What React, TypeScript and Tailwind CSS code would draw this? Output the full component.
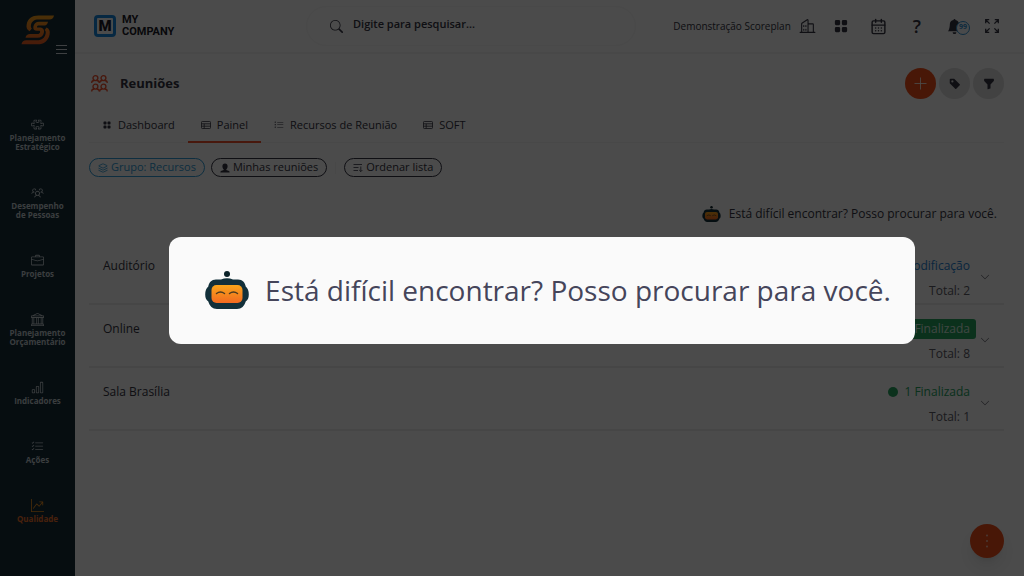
import type { ReactNode } from "react";
import {
  BsBank,
  BsBarChart,
  BsBellFill,
  BsBriefcase,
  BsChevronDown,
  BsFunnelFill,
  BsGraphUpArrow,
  BsGridFill,
  BsListCheck,
  BsListUl,
  BsPuzzle,
  BsSearch,
  BsTagFill,
} from "react-icons/bs";
import { PiBuildings, PiUsersThree } from "react-icons/pi";
import { LuCalendarDays, LuLayers } from "react-icons/lu";

const modules: { label: string[]; icon: ReactNode; active?: boolean }[] = [
  { label: ["Planejamento", "Estratégico"], icon: <BsPuzzle /> },
  { label: ["Desempenho", "de Pessoas"], icon: <PiUsersThree /> },
  { label: ["Projetos"], icon: <BsBriefcase /> },
  { label: ["Planejamento", "Orçamentário"], icon: <BsBank /> },
  { label: ["Indicadores"], icon: <BsBarChart /> },
  { label: ["Ações"], icon: <BsListCheck /> },
  { label: ["Qualidade"], icon: <BsGraphUpArrow />, active: true },
];

const tabs: { label: string; icon: ReactNode; active?: boolean }[] = [
  { label: "Dashboard", icon: <BsGridFill className="h-2 w-2" /> },
  { label: "Painel", icon: <TableIcon />, active: true },
  { label: "Recursos de Reunião", icon: <BsListUl className="h-2.5 w-2.5" /> },
  { label: "SOFT", icon: <TableIcon /> },
];

function ScoreplanLogo() {
  return (
    <svg viewBox="0 0 34 30" className="h-[30px] w-[34px]" aria-label="Scoreplan" role="img">
      <defs>
        <linearGradient id="brand" x1="0" y1="0" x2="0" y2="30" gradientUnits="userSpaceOnUse">
          <stop offset="0" stopColor="#f6a21b" />
          <stop offset="1" stopColor="#ee5a24" />
        </linearGradient>
      </defs>
      <g fill="url(#brand)">
        <path d="M33 0.500C32.500 3 31 4.500 28.500 4.500H17.500C13 4.500 10.800 6.500 10 9.800C9.700 11.500 9.900 12.600 10.800 13.600L8.600 16.200C6 14.800 5 12.500 5.700 9.300C6.800 3.800 11 0.500 17.500 0.500Z" />
        <path d="M27 6.700C26.500 9.200 25 10.600 22.500 10.600H18.200C16.800 10.600 16.200 11 16 11.700C15.900 12.400 16.200 12.600 17 12.600H18.200C21.800 12.600 23.600 14.500 22.900 17.800C22.200 21 20 22.800 16.500 22.800H4.500C5 20.300 6.500 19.100 9 19.100H16.300C17.900 19.100 18.800 18.500 19.100 17.300C19.300 16.200 18.900 15.800 17.500 15.800H16C13.200 15.800 11.800 14.200 12.400 11.400C13 8.400 15 6.700 18 6.700Z" />
        <path d="M25.500 12.600C28.300 13.800 29.300 16.200 28.600 19.400C27.500 25.500 23 29.300 16.500 29.300H0.500C1 26.700 2.600 25.300 5.200 25.300H16.500C20.800 25.300 23.700 23 24.600 18.800C25 17 24.700 16 23.700 15.100Z" />
      </g>
    </svg>
  );
}

function Robot({ className }: { className: string }) {
  return (
    <svg viewBox="0 0 44 38" className={className} aria-hidden="true">
      <defs>
        <linearGradient id="face" x1="0" y1="0" x2="0" y2="1">
          <stop offset="0" stopColor="#f9a51a" />
          <stop offset="1" stopColor="#f26a21" />
        </linearGradient>
      </defs>
      <circle cx="22" cy="3" r="3" fill="#0b2229" />
      <path
        d="M16 8.500Q22 6 28 8.500H33C37.500 8.500 40 11.500 40.700 15.500Q43.800 18 43.800 23.500Q43.800 28.500 40.700 30.500C39.500 35 36.500 38 32 38H12C7.500 38 4.500 35 3.300 30.500Q0.200 28.500 0.200 23.500Q0.200 18 3.300 15.500C4 11.500 6.500 8.500 11 8.500Z"
        fill="#12303a"
      />
      <rect x="6.500" y="14" width="31" height="18" rx="5" fill="url(#face)" />
      <path d="M11.500 22.500Q15.500 19.500 19.500 22.500M24.500 22.500Q28.500 19.500 32.500 22.500" fill="none" stroke="#4a3a20" strokeWidth="1.500" strokeLinecap="round" />
    </svg>
  );
}

function MeetingIcon() {
  const people = [
    [0, 0],
    [8.5, 0],
    [0, 9],
    [8.5, 9],
  ];
  return (
    <svg viewBox="0 0 18 18" className="h-[17px] w-[17px]" fill="none" stroke="#f0502d" strokeWidth="1.400" aria-hidden="true">
      {people.map(([x, y]) => (
        <g key={`${x}-${y}`} transform={`translate(${x} ${y})`}>
          <circle cx="4.700" cy="3.300" r="2.600" />
          <path d="M0.800 8.400V7.600C0.800 6.400 1.800 6 3.400 5.800M6 5.800C7.600 6 8.600 6.400 8.600 7.600V8.400" />
        </g>
      ))}
    </svg>
  );
}

function TableIcon() {
  return (
    <svg viewBox="0 0 10 10" className="h-2.5 w-2.5" fill="none" stroke="currentColor" strokeWidth="0.800" aria-hidden="true">
      <rect x="0.500" y="1.500" width="9" height="7" rx="0.800" />
      <path d="M0.500 3.800H9.500M0.500 6.200H9.500M3.200 3.800V8.500" />
    </svg>
  );
}

function ExpandIcon() {
  return (
    <svg viewBox="0 0 14 14" className="h-3.5 w-3.5" fill="none" stroke="currentColor" strokeWidth="1.300" aria-hidden="true">
      <path d="M0.700 4.200V0.700H4.200M0.700 0.700L4.600 4.600M9.800 0.700H13.300V4.200M13.300 0.700L9.400 4.600M0.700 9.800V13.300H4.200M0.700 13.300L4.600 9.400M9.800 13.300H13.300V9.800M13.300 13.300L9.400 9.400" />
    </svg>
  );
}

function SortIcon() {
  return (
    <svg viewBox="0 0 10 10" className="h-2.5 w-2.5" fill="none" stroke="currentColor" strokeWidth="0.800" aria-hidden="true">
      <path d="M0.500 1.500H9M0.500 4.500H5.500M0.500 7.500H5M7.800 3.500V8.500M6.200 7L7.800 8.600L9.400 7" />
    </svg>
  );
}

function BustIcon() {
  return (
    <svg viewBox="0 0 10 10" className="h-2.5 w-2.5" fill="currentColor" aria-hidden="true">
      <path d="M5 0.500C6.700 0.500 7.700 1.700 7.600 3.400C7.500 4.900 6.900 5.700 6.300 6.300V7L9 8.100Q9.600 8.400 9.600 9.500H0.400Q0.400 8.400 1 8.100L3.700 7V6.300C3.100 5.700 2.500 4.900 2.400 3.400C2.300 1.700 3.300 0.500 5 0.500Z" />
    </svg>
  );
}

function Sidebar() {
  return (
    <aside className="flex w-[75px] shrink-0 flex-col bg-[#142c38]">
      <div className="flex h-[118px] flex-col pt-[15px]">
        <div className="flex justify-center">
          <ScoreplanLogo />
        </div>
        <button type="button" aria-label="Menu" className="mr-2 flex w-[11px] flex-col gap-[3px] self-end">
          <span className="h-px w-full bg-gray-300" />
          <span className="h-px w-full bg-gray-300" />
          <span className="h-px w-full bg-gray-300" />
        </button>
      </div>
      <nav className="flex flex-col gap-[35px]">
        {modules.map((m) => (
          <a
            key={m.label.join(" ")}
            href="#"
            className={`flex flex-col items-center gap-0.5 text-center text-[8px] leading-[9px] font-bold ${m.active ? "text-[#f0702a]" : "text-[#c3ccd1]"}`}
          >
            <span className={`text-[13px] ${m.active ? "text-[#f5921e]" : ""}`}>{m.icon}</span>
            <span>
              {m.label.map((line) => (
                <span key={line} className="block">
                  {line}
                </span>
              ))}
            </span>
          </a>
        ))}
      </nav>
    </aside>
  );
}

function Header() {
  return (
    <header className="flex h-[54px] items-center border-b-2 border-[#f1f1f1] pr-[25px] pl-[19px]">
      <div className="flex w-[212px] items-center gap-1.5">
        <span className="flex h-[22px] w-[22px] items-center justify-center rounded-[4px] border-[3px] border-[#1787dc] font-[Roboto] text-[15px] leading-none font-black text-[#1c1c28]">
          M
        </span>
        <span className="font-[Roboto] text-[11px] leading-3 font-bold text-[#1c1c28]">
          <span className="block">MY</span>
          <span className="block">COMPANY</span>
        </span>
      </div>
      <label className="flex h-10 w-[330px] items-center gap-2.5 rounded-full border border-[#f4f4f4] bg-[#fafafa] px-[23px]">
        <BsSearch className="h-[13px] w-[13px] text-[#3a3a48]" />
        <input
          type="search"
          aria-label="Pesquisar"
          placeholder="Digite para pesquisar..."
          className="min-w-0 flex-1 bg-transparent pb-1 text-[11px] font-semibold outline-none placeholder:text-[#343442]"
        />
      </label>
      <div className="ml-auto flex items-center text-[#343442]">
        <button type="button" className="flex items-center gap-2 text-[10px]">
          Demonstração Scoreplan
          <PiBuildings className="h-[17px] w-[17px]" />
        </button>
        <button type="button" aria-label="Aplicativos" className="ml-[18px]">
          <BsGridFill className="h-3.5 w-3.5" />
        </button>
        <button type="button" aria-label="Agenda" className="ml-[22px]">
          <LuCalendarDays className="h-[17px] w-[17px]" />
        </button>
        <button type="button" aria-label="Ajuda" className="ml-[26px] text-[18px] leading-4 font-semibold">
          ?
        </button>
        <button type="button" aria-label="Notificações" className="relative ml-[26px] w-[23px]">
          <BsBellFill className="h-[15px] w-[15px]" />
          <span className="absolute top-0.5 right-0 flex h-[14px] w-[14px] items-center justify-center rounded-full border border-[#2f8fd0] bg-[#f4f8fb] text-[7px] font-bold text-[#2f8fd0]">
            99
          </span>
        </button>
        <button type="button" aria-label="Tela cheia" className="ml-[15px]">
          <ExpandIcon />
        </button>
      </div>
    </header>
  );
}

const chip = "flex h-[19px] items-center gap-[3px] rounded-full border px-2 text-[11px]";

function Row({ name, total, children }: { name: string; total: number; children: ReactNode }) {
  return (
    <li className="flex h-[63px] items-start border-b-2 border-[#ebebeb] px-3.5">
      <span className="pt-3.5 text-[12px] leading-5">{name}</span>
      <div className="ml-auto flex flex-col items-end pt-3.5 text-[12px] leading-5 text-[#5b5b66]">
        {children}
        <span className="pt-[5px]">Total: {total}</span>
      </div>
      <button type="button" aria-label={`Expandir ${name}`} className="ml-2.5 pt-[30px] text-[#4d4d5a]">
        <BsChevronDown className="h-2.5 w-2.5" />
      </button>
    </li>
  );
}

export default function App() {
  return (
    <div className="flex min-h-screen bg-[#fafafa] font-['Open_Sans',sans-serif] text-[#343442]">
      <Sidebar />
      <div className="flex min-w-0 flex-1 flex-col">
        <Header />
        <main className="flex flex-1 flex-col pr-5 pl-3.5">
          <div className="flex h-[59px] items-center gap-3 pl-0.5">
            <MeetingIcon />
            <h1 className="flex-1 text-[13px] font-bold">Reuniões</h1>
            <div className="flex items-center gap-[3px]">
              <button type="button" aria-label="Adicionar" className="flex h-[31px] w-[31px] items-center justify-center rounded-full bg-[#f04e1a] text-white/80">
                <svg viewBox="0 0 13 13" className="h-[13px] w-[13px]" stroke="currentColor" aria-hidden="true">
                  <path d="M6.500 0.500V12.500M0.500 6.500H12.500" />
                </svg>
              </button>
              <button type="button" aria-label="Etiquetas" className="flex h-[31px] w-[31px] items-center justify-center rounded-full bg-[#dcdcdc]">
                <BsTagFill className="h-3 w-3" />
              </button>
              <button type="button" aria-label="Filtrar" className="flex h-[31px] w-[31px] items-center justify-center rounded-full bg-[#dcdcdc]">
                <BsFunnelFill className="h-3 w-3" />
              </button>
            </div>
          </div>
          <nav className="flex h-[30px] border-b border-[#f0f0f0]">
            {tabs.map((t) => (
              <a
                key={t.label}
                href="#"
                className={`-mb-px flex items-start gap-1.5 px-[13px] pt-0.5 text-[11px] leading-5 ${t.active ? "border-b-2 border-[#f0502d]" : ""}`}
              >
                <span className="flex h-5 w-2.5 items-center justify-center">{t.icon}</span>
                {t.label}
              </a>
            ))}
          </nav>
          <div className="flex items-center pt-[15px]">
            <button type="button" className={`${chip} border-[#2f9bd6] text-[#2f9bd6]`}>
              <LuLayers className="h-2.5 w-2.5" />
              Grupo: Recursos
            </button>
            <button type="button" className={`${chip} ml-1.5 border-[#343442]`}>
              <BustIcon />
              Minhas reuniões
            </button>
            <span className="mx-2 h-3 w-px bg-[#f0f0f0]" />
            <button type="button" className={`${chip} border-[#343442]`}>
              <SortIcon />
              Ordenar lista
            </button>
          </div>
          <div className="flex items-center justify-end gap-2 pt-[27px] pr-[7px] text-[12px] leading-5">
            <Robot className="h-4 w-[19px]" />
            Está difícil encontrar? Posso procurar para você.
          </div>
          <ul className="pt-[18px]">
            <Row name="Auditório" total={2}>
              <span className="text-[#1f7fd0]">2 Em modificação</span>
            </Row>
            <Row name="Online" total={8}>
              <span className="-mr-1.5 rounded-[3px] bg-[#25a35f] px-1.5 text-white/80">8 Finalizada</span>
            </Row>
            <Row name="Sala Brasília" total={1}>
              <span className="flex items-center gap-1.5 text-[#25a35f]">
                <span className="h-2.5 w-2.5 rounded-full bg-[#25a35f]" />1 Finalizada
              </span>
            </Row>
          </ul>
        </main>
      </div>
      <button
        type="button"
        aria-label="Mais opções"
        className="fixed right-5 bottom-[18px] flex h-[34px] w-[34px] items-center justify-center rounded-full bg-[#f04e1a] text-white/70 shadow-lg"
      >
        <svg viewBox="0 0 14 14" className="h-3.5 w-3.5" fill="currentColor" aria-hidden="true">
          <circle cx="7" cy="1.500" r="0.900" />
          <circle cx="7" cy="7" r="0.900" />
          <circle cx="7" cy="12.500" r="0.900" />
        </svg>
      </button>
      <div className="fixed inset-0 flex items-center justify-center bg-black/70 pt-1 pl-[60px]">
        <div role="dialog" aria-label="Assistente" className="flex h-[107px] items-center gap-4 rounded-xl bg-[#fafafa] pr-6 pl-9 text-[28px] text-[#45455a]">
          <Robot className="h-[38px] w-11" />
          <p>Está difícil encontrar? Posso procurar para você.</p>
        </div>
      </div>
    </div>
  );
}
